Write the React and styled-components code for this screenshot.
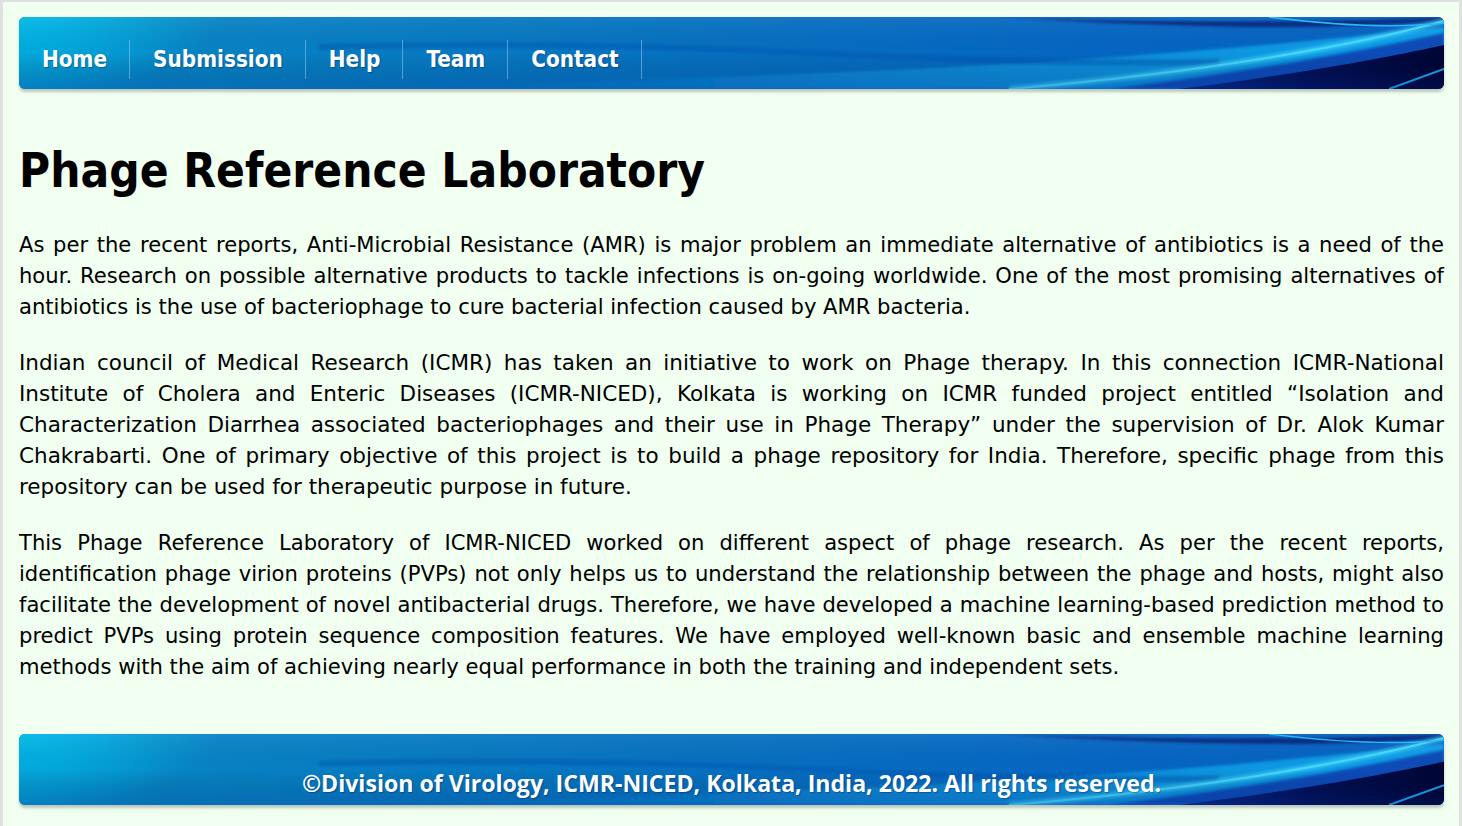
import React from "react";
import styled, { createGlobalStyle } from "styled-components";

const GlobalStyle = createGlobalStyle`
  html, body { margin: 0; padding: 0; }
  body { background: #f0fff0; }
`;

const Page = styled.div`
  box-sizing: border-box;
  min-height: 100vh;
  background: #f0fff0;
  border-top: 2px solid #e0e0e0;
  border-left: 3px solid #e0e0e0;
  border-right: 3px solid #e0e0e0;
  padding: 15px 15px 20px 16px;
  font-family: "DejaVu Sans", sans-serif;
  color: #000;
`;

const Banner = styled.div`
  position: relative;
  overflow: hidden;
  border-radius: 6px;
  height: ${(p) => p.$h}px;
  box-shadow: 0 3px 3px rgba(0, 0, 0, 0.22);
  background: #0670c0;
`;

const BannerArt = styled.svg`
  position: absolute;
  inset: 0;
  width: 100%;
  height: 100%;
  display: block;
`;

const Nav = styled.nav`
  position: relative;
  display: flex;
  align-items: center;
  padding-top: 23px;
  height: 39px;
`;

const NavLink = styled.a`
  display: block;
  padding: 0 22px 0 23px;
  line-height: 39px;
  font-family: "DejaVu Sans Condensed", "DejaVu Sans", sans-serif;
  font-stretch: condensed;
  font-size: 22.3px;
  font-weight: bold;
  color: #fff;
  text-decoration: none;
  border-right: 1px solid rgba(150, 200, 240, 0.55);
  text-shadow: 1px 1px 1px rgba(0, 20, 80, 0.35);
  cursor: pointer;
`;

const Title = styled.h1`
  margin: 52px 0 0 0;
  font-family: "DejaVu Sans Condensed", "DejaVu Sans", sans-serif;
  font-stretch: condensed;
  font-size: 47.3px;
  line-height: 60px;
  font-weight: bold;
`;

const Para = styled.p`
  margin: 28px 0 0 0;
  font-size: ${(p) => p.$size || 21.1}px;
  line-height: 31px;
  text-align: justify;
  & + & {
    margin-top: 25px;
  }
`;

const FooterWrap = styled.footer`
  margin-top: 52px;
`;

const FooterText = styled.div`
  position: relative;
  text-align: center;
  padding-top: 36px;
  font-family: "Open Sans", "Noto Sans", sans-serif;
  font-size: 23.1px;
  line-height: 26px;
  font-weight: bold;
  color: #fff;
  text-shadow: 1px 1px 1px rgba(0, 20, 80, 0.35);
`;

function Swoosh({ id }) {
  return (
    <BannerArt viewBox="0 0 1425 72" preserveAspectRatio="none" aria-hidden="true">
      <defs>
        <linearGradient id={`${id}-base`} x1="0" y1="0" x2="1" y2="0">
          <stop offset="0" stopColor="#0598d2" />
          <stop offset="0.1" stopColor="#0784c4" />
          <stop offset="0.45" stopColor="#0672c0" />
          <stop offset="0.75" stopColor="#0566c2" />
          <stop offset="1" stopColor="#0560c0" />
        </linearGradient>
        <linearGradient id={`${id}-v`} x1="0" y1="0" x2="0" y2="1">
          <stop offset="0" stopColor="#ffffff" stopOpacity="0.06" />
          <stop offset="0.5" stopColor="#000000" stopOpacity="0" />
          <stop offset="1" stopColor="#002a90" stopOpacity="0.22" />
        </linearGradient>
        <radialGradient id={`${id}-glow`} cx="0" cy="0" r="1" gradientUnits="userSpaceOnUse" gradientTransform="translate(0 0) scale(200 75)">
          <stop offset="0" stopColor="#00b8e6" stopOpacity="1" />
          <stop offset="1" stopColor="#00b8e6" stopOpacity="0" />
        </radialGradient>
        <linearGradient id={`${id}-band`} x1="0" y1="0" x2="1" y2="0">
          <stop offset="0" stopColor="#0d92dc" stopOpacity="0" />
          <stop offset="0.4" stopColor="#0d92dc" stopOpacity="0.7" />
          <stop offset="1" stopColor="#12a8ee" stopOpacity="0.9" />
        </linearGradient>
        <linearGradient id={`${id}-navy`} x1="0" y1="0" x2="1" y2="0">
          <stop offset="0" stopColor="#062a8a" />
          <stop offset="0.5" stopColor="#020f55" />
          <stop offset="1" stopColor="#000535" />
        </linearGradient>
        <filter id={`${id}-blur`} x="-10%" y="-50%" width="120%" height="200%">
          <feGaussianBlur stdDeviation="1.5" />
        </filter>
      </defs>
      <rect x="0" y="0" width="1425" height="72" fill={`url(#${id}-base)`} />
      <rect x="0" y="0" width="1425" height="72" fill={`url(#${id}-glow)`} />
      <path d="M 420 72 C 700 55, 950 62, 1425 10 L 1425 72 Z" fill={`url(#${id}-band)`} filter={`url(#${id}-blur)`} />
      <path d="M 300 30 C 700 20, 900 50, 1200 45" stroke="#0558b0" strokeOpacity="0.5" strokeWidth="6" fill="none" filter={`url(#${id}-blur)`} />
      <path d="M 980 0 C 1150 6, 1300 6, 1425 0 L 1425 4 C 1300 14, 1150 10, 980 0 Z" fill="#03227a" filter={`url(#${id}-blur)`} />
      <path d="M 1090 72 C 1250 52, 1360 30, 1425 16 L 1425 72 Z" fill="#0a4bb8" filter={`url(#${id}-blur)`} />
      <path d="M 1160 72 C 1290 56, 1380 38, 1425 28 L 1425 72 Z" fill={`url(#${id}-navy)`} />
      <path d="M 990 72 C 1180 56, 1330 30, 1425 4" stroke="#5ae4ff" strokeOpacity="0.5" strokeWidth="6" fill="none" filter={`url(#${id}-blur)`} />
      <path d="M 990 72 C 1180 56, 1330 30, 1425 4" stroke="#3fdcff" strokeWidth="2" fill="none" />
      <path d="M 1250 0 C 1330 10, 1390 10, 1425 6" stroke="#1fb8f5" strokeWidth="1.5" fill="none" />
      <path d="M 1370 72 L 1425 52" stroke="#1aa6f0" strokeWidth="2" fill="none" />
      <rect x="0" y="0" width="1425" height="72" fill={`url(#${id}-v)`} />
    </BannerArt>
  );
}

const navItems = ["Home", "Submission", "Help", "Team", "Contact"];

export default function App() {
  return (
    <>
      <GlobalStyle />
      <Page>
        <Banner $h={72}>
          <Swoosh id="hdr" />
          <Nav>
            {navItems.map((n) => (
              <NavLink key={n}>{n}</NavLink>
            ))}
          </Nav>
        </Banner>

        <Title>Phage Reference Laboratory</Title>

        <Para>
          As per the recent reports, Anti-Microbial Resistance (AMR) is major problem an immediate alternative of
          antibiotics is a need of the hour. Research on possible alternative products to tackle infections is on-going
          worldwide. One of the most promising alternatives of antibiotics is the use of bacteriophage to cure bacterial
          infection caused by AMR bacteria.
        </Para>
        <Para $size={21.5}>
          Indian council of Medical Research (ICMR) has taken an initiative to work on Phage therapy. In this connection
          ICMR-National Institute of Cholera and Enteric Diseases (ICMR-NICED), Kolkata is working on ICMR funded project
          entitled “Isolation and Characterization Diarrhea associated bacteriophages and their use in Phage Therapy”
          under the supervision of Dr. Alok Kumar Chakrabarti. One of primary objective of this project is to build a
          phage repository for India. Therefore, specific phage from this repository can be used for therapeutic purpose
          in future.
        </Para>
        <Para>
          This Phage Reference Laboratory of ICMR-NICED worked on different aspect of phage research. As per the recent
          reports, identification phage virion proteins (PVPs) not only helps us to understand the relationship between
          the phage and hosts, might also facilitate the development of novel antibacterial drugs. Therefore, we have
          developed a machine learning-based prediction method to predict PVPs using protein sequence composition
          features. We have employed well-known basic and ensemble machine learning methods with the aim of achieving
          nearly equal performance in both the training and independent sets.
        </Para>

        <FooterWrap>
          <Banner $h={71}>
            <Swoosh id="ftr" />
            <FooterText>©Division of Virology, ICMR-NICED, Kolkata, India, 2022. All rights reserved.</FooterText>
          </Banner>
        </FooterWrap>
      </Page>
    </>
  );
}
